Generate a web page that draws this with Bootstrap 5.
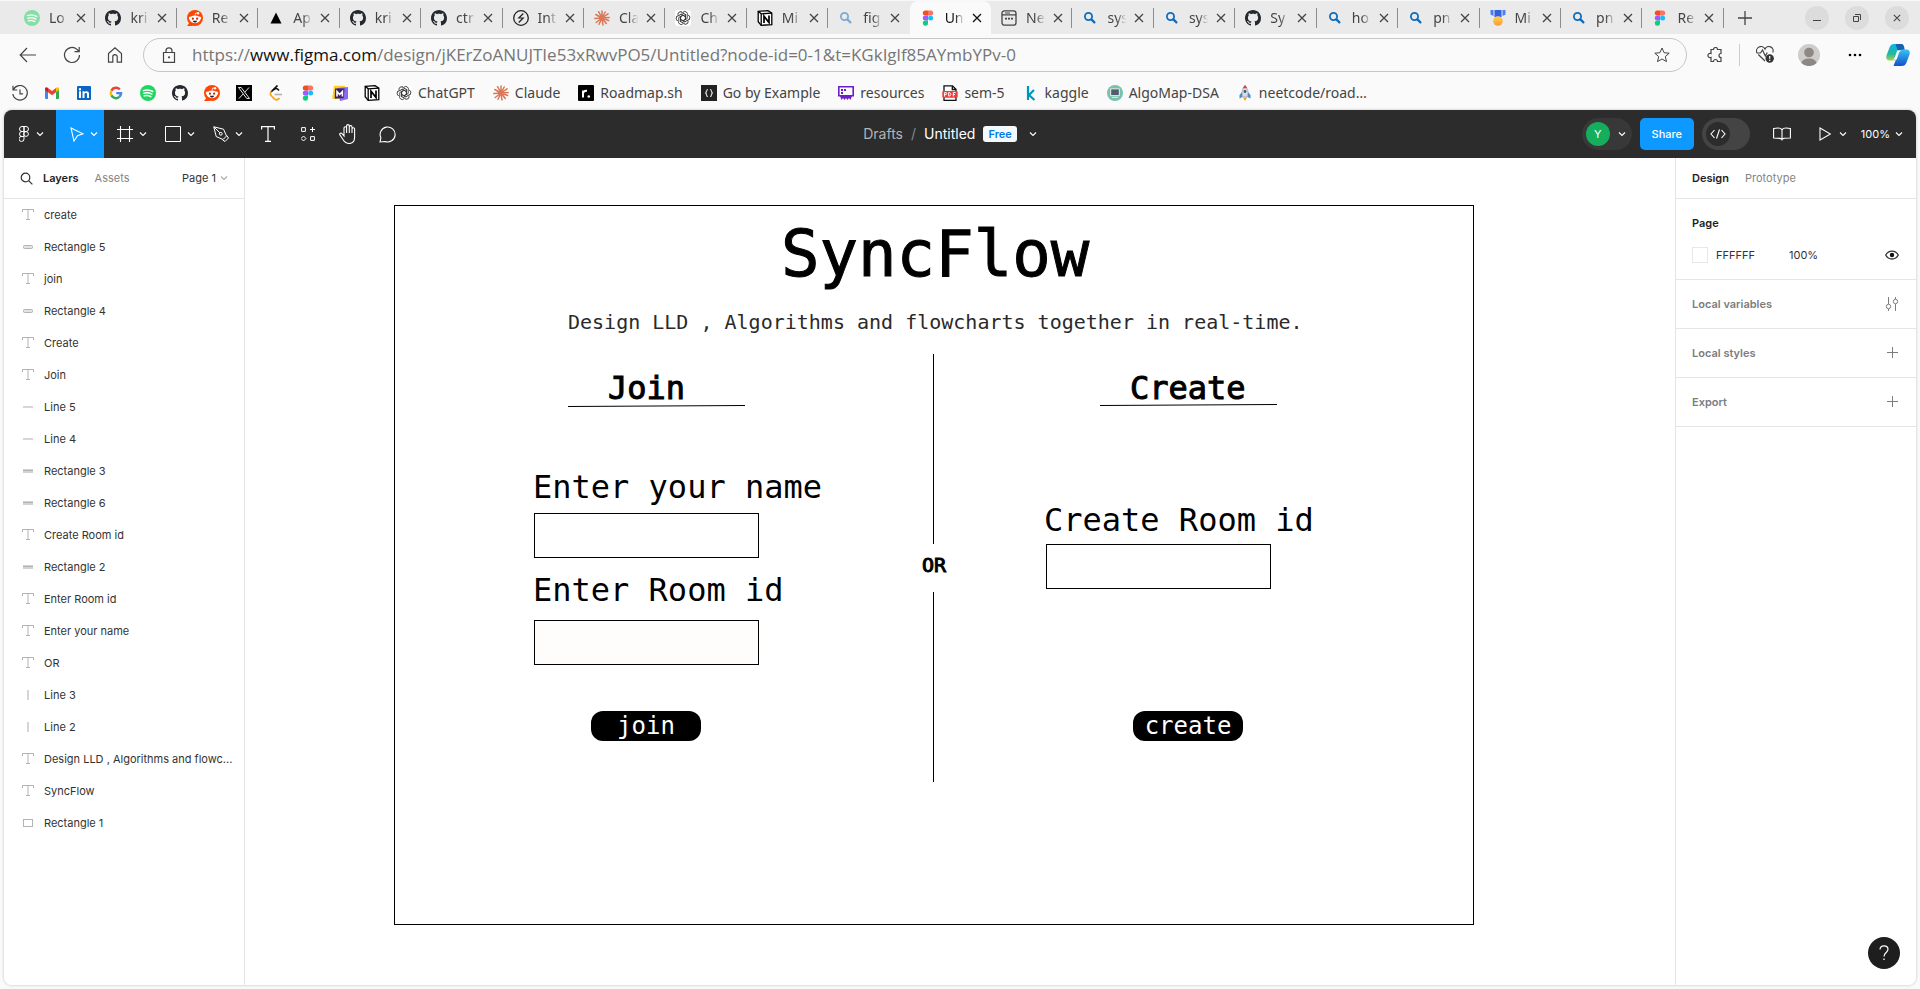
<!DOCTYPE html>
<html lang="en">
<head>
<meta charset="utf-8">
<meta name="viewport" content="width=device-width, initial-scale=1">
<title>Untitled – Figma</title>
<link href="https://cdn.jsdelivr.net/npm/bootstrap@5.3.0/dist/css/bootstrap.min.css" rel="stylesheet">
<style>
  :root { --line: #e5e5e5; --ink: #333; --blue: #0d99ff; --bar: #2c2c2c; }
  body { background: #fafafa; color: var(--ink); font-family: Inter, sans-serif; font-size: 11px; line-height: 16px; }
  button { background: none; border: 0; padding: 0; color: inherit; }
  a { color: inherit; text-decoration: none; }
  svg { display: block; flex: none; }
  .ln { fill: none; stroke: currentColor; }
  .browser-text { font-family: "Noto Sans", sans-serif; font-size: 14px; line-height: 20px; color: #444; }

  /* tab strip */
  .tab-strip { height: 34px; background: #eaeaea; border-top: 1px solid #f8f8f8; padding-left: 14px; }
  .tab-item { flex: 1 1 0; min-width: 0; height: 34px; padding-left: 10px; position: relative; }
  .tab-item::after { content: ""; position: absolute; right: 0; top: 7px; height: 20px; border-right: 1px solid #8c8c8c; }
  .tab-item.active-tab { background: #fafafa; border-radius: 8px 8px 0 0; color: #111; }
  .tab-item.active-tab::after, .tab-item.no-sep::after { display: none; }
  .tab-name { width: 24px; margin-left: 9px; white-space: nowrap;
    -webkit-mask-image: linear-gradient(90deg, #000 40%, transparent 80%); mask-image: linear-gradient(90deg, #000 40%, transparent 80%); }
  .tab-close { margin-left: 3px; }
  .dim { opacity: .5; }
  .strip-end { width: 196px; }
  .new-tab { margin: 0 53px 0 14px; }
  .win-btn { width: 24px; height: 24px; border-radius: 50%; background: #dcdcdc; }

  /* address row */
  .address-row { height: 41px; padding: 0 10px 0 19px; gap: 20px; color: #444; }
  .nav-keys { gap: 26px; }
  .address-box { flex: 1; height: 34px; border: 1px solid #c6c6c6; border-radius: 17px; padding: 0 16px 0 18px; background: #fafafa; }
  .url-text { font-family: "Open Sans", sans-serif; font-size: 17px; line-height: 24px; color: #767676; margin-left: 16px; }
  .url-text b { color: #111; font-weight: 400; }
  .bookmark-row { height: 35px; padding-left: 12px; gap: 16px; white-space: nowrap; }
  .bm-group { gap: 18px; }
  .bm { gap: 6px; }

  /* editor */
  .editor { margin: 0 4px 4px; min-height: calc(100vh - 114px); border-radius: 8px; background: #fff; box-shadow: 0 0 3px #bbb; overflow: hidden; }
  .editor-bar { height: 48px; background: var(--bar); color: #fff; }
  .bar-side { flex: 1; }
  .tool { height: 48px; display: flex; align-items: center; justify-content: center; gap: 6px; }
  .tool-menu { width: 52px; padding-left: 2px; gap: 7px; }
  .tool-wide { width: 48px; padding-left: 8px; }
  .tool-single { width: 40px; }
  .tool.on { background: var(--blue); }
  .doc-title { font-size: 14px; line-height: 20px; margin-right: 20px; gap: 8px; }
  .free-tag { background: #f2f9ff; color: #007be5; font-size: 11px; font-weight: 600; line-height: 16px; padding: 0 5px; border-radius: 3px; }
  .user-pill { width: 50px; height: 32px; border-radius: 16px; background: #383838; padding-left: 4px; }
  .user-dot { width: 24px; height: 24px; border-radius: 50%; background: #14ae5c; }
  .share-btn { width: 54px; height: 32px; border-radius: 5px; background: var(--blue); font-weight: 500; }
  .dev-switch { width: 48px; height: 32px; border-radius: 16px; background: #444; padding-left: 4px; }
  .dev-knob { width: 24px; height: 24px; border-radius: 50%; background: var(--bar); }
  .library-btn { margin: 0 28px 0 23px; }
  .zoom-btn { margin: 0 13px 0 14px; gap: 5px; }

  .side-left { width: 241px; border-right: 1px solid var(--line); }
  .side-right { width: 241px; border-left: 1px solid var(--line); }
  .side-head { height: 41px; border-bottom: 1px solid var(--line); padding: 0 16px; }
  .muted { color: #858585; }
  .strong { font-weight: 600; color: #1e1e1e; }
  .layers-tab { margin: 0 16px 0 10px; }
  .layer { height: 32px; padding: 0 10px 0 18px; gap: 10px; }
  .layer svg { color: #b3b3b3; }
  .panel { border-bottom: 1px solid var(--line); padding: 8px 17px 8px 16px; }
  .panel-line { height: 32px; }
  .swatch { width: 16px; height: 16px; border: 1px solid #e8e8e8; }
  .hex { width: 73px; }
  .quiet { color: #7d7d7d; font-weight: 600; }

  /* canvas objects */
  .stage { position: relative; min-width: 0; overflow: hidden; }
  .artboard { position: absolute; left: 149px; top: 47px; width: 1080px; height: 720px; border: 1px solid #000; color: #000; font-family: "DejaVu Sans Mono", monospace; }
  .artboard > * { position: absolute; white-space: pre; margin: 0; }
  .t64 { font-size: 64px; line-height: 64px; font-weight: 400; }
  .t32 { font-size: 32px; line-height: 32px; font-weight: 400; }
  .t20 { font-size: 20px; line-height: 20px; }
  .medium { -webkit-text-stroke: 1px #000; }
  .thin { color: #2a2a2a; }
  .field { width: 225px; height: 45px; border: 1px solid #000; border-radius: 0; background: #fff; padding: 0 8px; }
  .field.warm { background: #fffdfc; }
  .rule { width: 1px; height: 190px; background: #000; }
  .pill { width: 110px; height: 30px; border-radius: 12px; background: #000; color: #fff; font-size: 24px; line-height: 30px; }
  .help { position: absolute; right: 16px; bottom: 16px; width: 32px; height: 32px; border-radius: 50%; background: #1e1e1e; color: #fff; z-index: 2; }
</style>
</head>
<body>

<svg width="0" height="0" class="position-absolute" aria-hidden="true">
  <defs>
    <linearGradient id="cpA" x1="0" y1="0" x2="0" y2="1"><stop offset="0" stop-color="#0bb3e8"/><stop offset=".6" stop-color="#22b8a0"/><stop offset="1" stop-color="#a6d64a"/></linearGradient>
    <linearGradient id="cpB" x1="0" y1="0" x2="0" y2="1"><stop offset="0" stop-color="#35c4f4"/><stop offset="1" stop-color="#1550c8"/></linearGradient>
    <linearGradient id="medal" x1="0" y1="0" x2="0" y2="1"><stop offset="0" stop-color="#ffd34d"/><stop offset="1" stop-color="#f79a3c"/></linearGradient>
  </defs>
  <symbol id="i-x" viewBox="0 0 10 10"><path class="ln" d="M1 1l8 8M9 1L1 9" stroke-width="1.3"/></symbol>
  <symbol id="i-github" viewBox="0 0 16 16"><path fill="#24292f" d="M8 0C3.58 0 0 3.58 0 8c0 3.54 2.29 6.53 5.47 7.59.4.07.55-.17.55-.38 0-.19-.01-.82-.01-1.49-2.01.37-2.53-.49-2.69-.94-.09-.23-.48-.94-.82-1.13-.28-.15-.68-.52-.01-.53.63-.01 1.08.58 1.23.82.72 1.21 1.87.87 2.33.66.07-.52.28-.87.51-1.07-1.78-.2-3.64-.89-3.64-3.95 0-.87.31-1.59.82-2.15-.08-.2-.36-1.02.08-2.12 0 0 .67-.21 2.2.82.64-.18 1.32-.27 2-.27s1.36.09 2 .27c1.53-1.04 2.2-.82 2.2-.82.44 1.1.16 1.92.08 2.12.51.56.82 1.27.82 2.15 0 3.07-1.87 3.75-3.65 3.95.29.25.54.73.54 1.48 0 1.07-.01 1.93-.01 2.2 0 .21.15.46.55.38A8.01 8.01 0 0 0 16 8c0-4.42-3.58-8-8-8z"/></symbol>
  <symbol id="i-spotify" viewBox="0 0 16 16"><circle cx="8" cy="8" r="8" fill="#1ed760"/><path fill="none" stroke="#fff" stroke-linecap="round" stroke-width="1.5" d="M3.4 5.6c3.2-.9 6.8-.6 9.4.9M3.9 8.3c2.8-.8 5.7-.4 8 .9M4.300 10.800c2.300-.6 4.700-.3 6.600.8"/></symbol>
  <symbol id="i-reddit" viewBox="0 0 16 16"><circle cx="8" cy="8" r="8" fill="#ff4500"/><path fill="#ff4500" d="M0 16l3-4 3 4z"/><circle cx="3.300" cy="8" r="1.500" fill="#fff"/><circle cx="12.700" cy="8" r="1.500" fill="#fff"/><circle cx="11" cy="3.200" r="1.200" fill="#fff"/><path fill="none" stroke="#fff" stroke-width=".7" d="M8 5.500l.6-2.500 2.300.3"/><ellipse cx="8" cy="9.300" rx="5.300" ry="3.900" fill="#fff"/><circle cx="5.900" cy="8.700" r="1.100" fill="#c22e00"/><circle cx="10.100" cy="8.700" r="1.100" fill="#c22e00"/><path fill="#142030" d="M5.800 10.700h4.400c-.4 1.400-1.300 1.700-2.200 1.700s-1.800-.3-2.200-1.700z"/></symbol>
  <symbol id="i-vercel" viewBox="0 0 16 16"><path fill="#000" d="M8 2.500L13.500 13.500h-11z"/></symbol>
  <symbol id="i-interview" viewBox="0 0 16 16"><circle cx="8" cy="8" r="7.300" fill="none" stroke="#222" stroke-width="1.300"/><path fill="none" stroke="#222" stroke-width="1.200" d="M10.300 3.500L5.800 8h4.400l-4.500 4.500"/></symbol>
  <symbol id="i-claude" viewBox="0 0 16 16"><path stroke="#d97757" stroke-width="1.500" stroke-linecap="round" d="M8 8V1M8 8l3.200-6M8 8l6-4.200M8 8l7.200-.6M8 8l6.600 2.500M8 8l4.300 5.500M8 8l1 7M8 8l-3 6.300M8 8l-5.800 4.500M8 8L.8 8.600M8 8L1.800 4.500M8 8L4.600 1.700"/></symbol>
  <symbol id="i-openai" viewBox="0 0 16 16"><rect width="16" height="16" rx="3" fill="#fff"/><g fill="none" stroke="#333" stroke-width=".9"><path id="petal" d="M8 2.200a2.600 2.600 0 0 1 4.200 2.900v3.400L8.200 10.800 5.800 9.400"/><use href="#petal" transform="rotate(60 8 8)"/><use href="#petal" transform="rotate(120 8 8)"/><use href="#petal" transform="rotate(180 8 8)"/><use href="#petal" transform="rotate(240 8 8)"/><use href="#petal" transform="rotate(300 8 8)"/></g></symbol>
  <symbol id="i-notion" viewBox="0 0 16 16"><path fill="#fff" stroke="#000" stroke-width="1.300" d="M1.200 1.300l9.800-.6 3.800 2.500v11.500l-10.600.6-3-3.600z"/><path fill="none" stroke="#000" stroke-width="1.300" d="M1.200 1.300l3 2.500 10.600-.6M4.200 3.800v11.600"/><path fill="none" stroke="#000" stroke-width="1.700" d="M7 13V6.200l5 6.300V5.500"/></symbol>
  <symbol id="i-find" viewBox="0 0 16 16"><circle cx="6.500" cy="6.500" r="3.600" fill="none" stroke="#0f6cbd" stroke-width="1.800"/><path stroke="#0f6cbd" stroke-width="2.200" stroke-linecap="round" d="M9.400 9.400l3 3"/></symbol>
  <symbol id="i-figma" viewBox="0 0 16 16"><path fill="#f24e1e" d="M8 .5H5.300a2.500 2.500 0 000 5H8z"/><path fill="#ff7262" d="M8 .5h2.700a2.500 2.500 0 010 5H8z"/><path fill="#a259ff" d="M8 5.500H5.300a2.500 2.500 0 000 5H8z"/><circle cx="10.600" cy="8" r="2.500" fill="#1abcfe"/><path fill="#0acf83" d="M5.300 10.500H8V13a2.600 2.600 0 11-2.700-2.500z"/></symbol>
  <symbol id="i-page" viewBox="0 0 16 16"><rect x="1" y=".8" width="14" height="14.400" rx="2.500" fill="none" stroke="#444" stroke-width="1.300"/><path stroke="#444" stroke-width="1.200" fill="none" d="M1 4.800h14M4 3h5"/><path stroke="#444" stroke-width="1.600" d="M4 8.600h2m1 0h2m1 0h2"/></symbol>
  <symbol id="i-medal" viewBox="0 0 16 16"><path fill="#4d7df2" d="M.5 0h3v6l-3-1.500zM12.500 0h3v4.500l-3 1.500z"/><path fill="#2f63e0" d="M4.500 0h7v7l-3.500 2-3.500-2z"/><circle cx="8" cy="11" r="4.800" fill="url(#medal)"/></symbol>
  <symbol id="c-down" viewBox="0 0 8 6"><path class="ln" d="M1 1.500l3 3 3-3" stroke-width="1.100"/></symbol>
  <symbol id="l-text" viewBox="0 0 12 12"><path class="ln" d="M.5 3V.5h11V3M6 .5v10M4 10.500h4"/></symbol>
  <symbol id="l-round" viewBox="0 0 12 12"><rect x="1.500" y="4.500" width="9" height="3" rx="1" fill="#e2e2e2" stroke="currentColor"/></symbol>
  <symbol id="l-flat" viewBox="0 0 12 12"><path fill="#d2d2d2" d="M1 4h10v4H1z"/><path stroke="#b5b5b5" d="M1 5.500h10"/></symbol>
  <symbol id="l-hline" viewBox="0 0 12 12"><path stroke="#d6d6d6" stroke-width="2" d="M1 6h10"/></symbol>
  <symbol id="l-vline" viewBox="0 0 12 12"><path stroke="#d6d6d6" stroke-width="2" d="M6 1v10"/></symbol>
  <symbol id="l-rect" viewBox="0 0 12 12"><rect x="1.500" y="2.500" width="9" height="7" class="ln"/></symbol>
</svg>

<!-- browser tabs -->
<div class="tab-strip d-flex align-items-center browser-text">
  <div class="d-flex flex-grow-1" id="tabs">
    <div class="tab-item d-flex align-items-center"><svg class="dim" width="16" height="16"><use href="#i-spotify"/></svg><a href="#" class="tab-name">Lo</a><button class="tab-close" aria-label="Close tab"><svg width="10" height="10"><use href="#i-x"/></svg></button></div>
    <div class="tab-item d-flex align-items-center"><svg width="16" height="16"><use href="#i-github"/></svg><a href="#" class="tab-name">kri</a><button class="tab-close" aria-label="Close tab"><svg width="10" height="10"><use href="#i-x"/></svg></button></div>
    <div class="tab-item d-flex align-items-center"><svg width="16" height="16"><use href="#i-reddit"/></svg><a href="#" class="tab-name">Re</a><button class="tab-close" aria-label="Close tab"><svg width="10" height="10"><use href="#i-x"/></svg></button></div>
    <div class="tab-item d-flex align-items-center"><svg width="16" height="16"><use href="#i-vercel"/></svg><a href="#" class="tab-name">Ap</a><button class="tab-close" aria-label="Close tab"><svg width="10" height="10"><use href="#i-x"/></svg></button></div>
    <div class="tab-item d-flex align-items-center"><svg width="16" height="16"><use href="#i-github"/></svg><a href="#" class="tab-name">kri</a><button class="tab-close" aria-label="Close tab"><svg width="10" height="10"><use href="#i-x"/></svg></button></div>
    <div class="tab-item d-flex align-items-center"><svg width="16" height="16"><use href="#i-github"/></svg><a href="#" class="tab-name">ctr</a><button class="tab-close" aria-label="Close tab"><svg width="10" height="10"><use href="#i-x"/></svg></button></div>
    <div class="tab-item d-flex align-items-center"><svg width="16" height="16"><use href="#i-interview"/></svg><a href="#" class="tab-name">Int</a><button class="tab-close" aria-label="Close tab"><svg width="10" height="10"><use href="#i-x"/></svg></button></div>
    <div class="tab-item d-flex align-items-center"><svg width="16" height="16"><use href="#i-claude"/></svg><a href="#" class="tab-name">Cla</a><button class="tab-close" aria-label="Close tab"><svg width="10" height="10"><use href="#i-x"/></svg></button></div>
    <div class="tab-item d-flex align-items-center"><svg width="16" height="16"><use href="#i-openai"/></svg><a href="#" class="tab-name">Ch</a><button class="tab-close" aria-label="Close tab"><svg width="10" height="10"><use href="#i-x"/></svg></button></div>
    <div class="tab-item d-flex align-items-center"><svg width="16" height="16"><use href="#i-notion"/></svg><a href="#" class="tab-name">Mi</a><button class="tab-close" aria-label="Close tab"><svg width="10" height="10"><use href="#i-x"/></svg></button></div>
    <div class="tab-item no-sep d-flex align-items-center"><svg class="dim" width="16" height="16"><use href="#i-find"/></svg><a href="#" class="tab-name">fig</a><button class="tab-close" aria-label="Close tab"><svg width="10" height="10"><use href="#i-x"/></svg></button></div>
    <div class="tab-item active-tab d-flex align-items-center"><svg width="16" height="16"><use href="#i-figma"/></svg><a href="#" class="tab-name">Un</a><button class="tab-close" aria-label="Close tab"><svg width="10" height="10"><use href="#i-x"/></svg></button></div>
    <div class="tab-item d-flex align-items-center"><svg width="16" height="16"><use href="#i-page"/></svg><a href="#" class="tab-name">Ne</a><button class="tab-close" aria-label="Close tab"><svg width="10" height="10"><use href="#i-x"/></svg></button></div>
    <div class="tab-item d-flex align-items-center"><svg width="16" height="16"><use href="#i-find"/></svg><a href="#" class="tab-name">sys</a><button class="tab-close" aria-label="Close tab"><svg width="10" height="10"><use href="#i-x"/></svg></button></div>
    <div class="tab-item d-flex align-items-center"><svg width="16" height="16"><use href="#i-find"/></svg><a href="#" class="tab-name">sys</a><button class="tab-close" aria-label="Close tab"><svg width="10" height="10"><use href="#i-x"/></svg></button></div>
    <div class="tab-item d-flex align-items-center"><svg width="16" height="16"><use href="#i-github"/></svg><a href="#" class="tab-name">Sy</a><button class="tab-close" aria-label="Close tab"><svg width="10" height="10"><use href="#i-x"/></svg></button></div>
    <div class="tab-item d-flex align-items-center"><svg width="16" height="16"><use href="#i-find"/></svg><a href="#" class="tab-name">ho</a><button class="tab-close" aria-label="Close tab"><svg width="10" height="10"><use href="#i-x"/></svg></button></div>
    <div class="tab-item d-flex align-items-center"><svg width="16" height="16"><use href="#i-find"/></svg><a href="#" class="tab-name">pn</a><button class="tab-close" aria-label="Close tab"><svg width="10" height="10"><use href="#i-x"/></svg></button></div>
    <div class="tab-item d-flex align-items-center"><svg width="16" height="16"><use href="#i-medal"/></svg><a href="#" class="tab-name">Mi</a><button class="tab-close" aria-label="Close tab"><svg width="10" height="10"><use href="#i-x"/></svg></button></div>
    <div class="tab-item d-flex align-items-center"><svg width="16" height="16"><use href="#i-find"/></svg><a href="#" class="tab-name">pn</a><button class="tab-close" aria-label="Close tab"><svg width="10" height="10"><use href="#i-x"/></svg></button></div>
    <div class="tab-item d-flex align-items-center"><svg width="16" height="16"><use href="#i-figma"/></svg><a href="#" class="tab-name">Re</a><button class="tab-close" aria-label="Close tab"><svg width="10" height="10"><use href="#i-x"/></svg></button></div>
  </div>
  <div class="strip-end d-flex align-items-center">
    <button class="new-tab" aria-label="New tab"><svg width="14" height="14" viewBox="0 0 14 14"><path class="ln" d="M7 0v14M0 7h14" stroke-width="1.300"/></svg></button>
    <div class="d-flex gap-3">
      <button class="win-btn d-flex align-items-center justify-content-center" aria-label="Minimize"><svg width="8" height="8" viewBox="0 0 8 8"><path class="ln" d="M0 6.500h8"/></svg></button>
      <button class="win-btn d-flex align-items-center justify-content-center" aria-label="Restore"><svg width="8" height="8" viewBox="0 0 8 8"><path class="ln" d="M.5 2.500h5v5h-5zM2 .5h5.500V6"/></svg></button>
      <button class="win-btn d-flex align-items-center justify-content-center" aria-label="Close"><svg width="8" height="8"><use href="#i-x"/></svg></button>
    </div>
  </div>
</div>

<!-- address row -->
<div class="address-row d-flex align-items-center">
  <div class="nav-keys d-flex align-items-center">
    <button aria-label="Back"><svg width="18" height="16" viewBox="0 0 18 16"><path class="ln" d="M17 8H1.500M8 1L1.200 8 8 15" stroke-width="1.200"/></svg></button>
    <button aria-label="Reload"><svg width="18" height="18" viewBox="0 0 18 18"><path class="ln" d="M16.500 9A7.500 7.500 0 1 1 14 3.400L16 5.500M16.200 1v4.700h-4.700" stroke-width="1.200"/></svg></button>
    <button aria-label="Home"><svg width="16" height="16" viewBox="0 0 16 16"><path class="ln" d="M1.500 6.500L8 .8l6.500 5.700v8.700h-4.300V9.800a2.200 2.200 0 0 0-4.400 0v5.400H1.500z" stroke-width="1.200"/></svg></button>
  </div>
  <div class="address-box d-flex align-items-center">
    <svg width="14" height="16" viewBox="0 0 14 16"><path class="ln" d="M1.500 5.500h11v9.800h-11zM4 5.500V3.800a3 3 0 0 1 6 0v1.700" stroke-width="1.200"/><circle cx="7" cy="10.300" r="1.100" fill="currentColor"/></svg>
    <div class="url-text text-nowrap">https://<b>www.figma.com</b>/design/jKErZoANUJTIe53xRwvPO5/Untitled?node-id=0-1&amp;t=KGkIglf85AYmbYPv-0</div>
    <button class="ms-auto" aria-label="Add to favorites"><svg width="16" height="16" viewBox="0 0 16 16"><path class="ln" stroke="#666" d="M8 1l2.100 4.700 5.100.5-3.900 3.400 1.200 5L8 12l-4.500 2.600 1.200-5L.8 6.200l5.100-.5z"/></svg></button>
  </div>
  <div class="d-flex align-items-center">
    <button aria-label="Extensions" class="me-3"><svg width="16" height="16" viewBox="0 0 16 16"><path class="ln" d="M4 2.500h2.500a2 2 0 0 1 4 0H14v4a2 2 0 1 0 0 4v4h-3.500a2 2 0 1 0-4 0H4v-4a2.200 2.200 0 1 1 0-4z" stroke-width="1.200"/></svg></button>
    <div class="vr me-3"></div>
    <button aria-label="Performance"><svg width="18" height="17" viewBox="0 0 18 17"><path class="ln" d="M9 15L2.300 8.500M1 7A4.200 4.200 0 0 1 9 3a4.200 4.200 0 0 1 7.700 3.500M.8 7h3.700L6.500 4l2.800 6 2-3.500" stroke-width="1.200"/><circle cx="13.700" cy="12.500" r="4.200" fill="#333"/><path stroke="#fff" stroke-width="1.200" d="M13.700 10v2.800m0 1v1.200"/></svg></button>
    <button aria-label="Profile" class="mx-4"><svg width="22" height="22" viewBox="0 0 22 22"><circle cx="11" cy="11" r="11" fill="#cfccc9"/><circle cx="11" cy="8.500" r="4.800" fill="#8c8885"/><path fill="#8c8885" d="M3.400 19c.8-3.200 4-4.600 7.600-4.600s6.800 1.400 7.600 4.600a11 11 0 0 1-15.200 0z"/></svg></button>
    <button aria-label="Menu" class="ms-1"><svg width="14" height="4" viewBox="0 0 14 4"><circle cx="2" cy="2" r="1.300"/><circle cx="7" cy="2" r="1.300"/><circle cx="12" cy="2" r="1.300"/></svg></button>
    <button aria-label="Copilot" class="ms-4"><svg width="24" height="22" viewBox="0 0 24 22"><path fill="url(#cpA)" d="M8.500 0h8l-4.500 12c-1 3-2 4.500-5 4.500H3.500C.5 16.500-.2 14 .5 11.500l3-8C4.400 1 5.800 0 8.500 0z"/><path fill="#1c5fb0" d="M9.500 0h6c1.500 0 2.300 1.500 2.800 3.500L18.600 6h-7z"/><path fill="url(#cpB)" d="M15.500 22h-8l4.500-12c1-3 2-4.500 5-4.500h3.500c3 0 3.700 2.500 3 5l-3 8c-.9 2.500-2.300 3.500-5 3.500z"/><path fill="#fff" d="M11.200 6.500h4c-1.800.8-2.400 2.500-3 4.500l-1.500 4.500h-4c1.800-.8 2.400-2.500 3-4.500z"/></svg></button>
  </div>
</div>

<!-- bookmarks -->
<div class="bookmark-row d-flex align-items-center browser-text">
  <a href="#" aria-label="History"><svg width="16" height="16" viewBox="0 0 16 16"><path class="ln" d="M1.500 4.500A7.300 7.300 0 1 1 .8 9M1 .8v4.200h4.300M8 4.500v4.300h3" stroke-width="1.200"/></svg></a>
  <a href="#" aria-label="Gmail"><svg width="16" height="16" viewBox="0 0 16 16"><path fill="#4285f4" d="M1 4l3 2.200V14H2a1 1 0 0 1-1-1z"/><path fill="#34a853" d="M15 4l-3 2.200V14h2a1 1 0 0 0 1-1z"/><path fill="#ea4335" d="M4 3l4 3 4-3v4.200l-4 3-4-3z"/><path fill="#c5221f" d="M1 4c0-2 2-2 3-1v4.200L1 5z"/><path fill="#fbbc04" d="M15 4c0-2-2-2-3-1v4.200L15 5z"/></svg></a>
  <a href="#" aria-label="LinkedIn"><svg width="16" height="16" viewBox="0 0 16 16"><rect x="1" y="1" width="14" height="14" rx="1" fill="#0a66c2"/><path fill="#fff" d="M3 6.300h2V13H3zM4 3a1.200 1.200 0 1 1 0 2.400A1.200 1.200 0 0 1 4 3zM6.500 6.300h2v1c.9-1.700 4.500-1.700 4.500 1.500V13h-2V9.300c0-2-2.500-1.700-2.500 0V13h-2z"/></svg></a>
  <a href="#" aria-label="Google"><svg width="16" height="16" viewBox="0 0 16 16"><g fill="none" stroke-width="2.400"><path stroke="#ea4335" d="M3.400 5.600A5.100 5.100 0 0 1 11.800 4.500"/><path stroke="#fbbc05" d="M3.400 5.600a5.100 5.100 0 0 0 0 4.800"/><path stroke="#34a853" d="M3.400 10.400a5.100 5.100 0 0 0 7.900 1.500"/><path stroke="#4285f4" d="M11.300 11.900A5.100 5.100 0 0 0 13.100 8.100H8.200"/></g></svg></a>
  <a href="#" aria-label="Spotify"><svg width="16" height="16"><use href="#i-spotify"/></svg></a>
  <a href="#" aria-label="GitHub"><svg width="16" height="16"><use href="#i-github"/></svg></a>
  <a href="#" aria-label="Reddit"><svg width="16" height="16"><use href="#i-reddit"/></svg></a>
  <a href="#" aria-label="X"><svg width="16" height="16" viewBox="0 0 16 16"><rect width="16" height="16" fill="#000"/><path fill="none" stroke="#fff" stroke-width=".9" d="M2.500 2.500h2.700l8.300 11h-2.700zM13 2.500L8.800 7.200M7.200 8.900l-4.300 4.700"/></svg></a>
  <a href="#" aria-label="LeetCode"><svg width="16" height="16" viewBox="0 0 16 16"><path fill="none" stroke="#111" stroke-width="1.700" d="M9.500.5L3 7"/><path fill="none" stroke="#ffa116" stroke-width="1.700" d="M3.500 6.500c-1.500 1.500-1.500 3 0 4.500l2.500 2.600c1.500 1.500 3 1.500 4.500.2l1-1"/><path fill="none" stroke="#111" stroke-width="1.500" d="M5 5l2.500-1.300c1.200-.5 2.200.2 3.500 1.700"/><path stroke="#b3b3b3" stroke-width="1.600" d="M6.500 9.500H14"/></svg></a>
  <a href="#" aria-label="Figma"><svg width="16" height="16"><use href="#i-figma"/></svg></a>
  <a href="#" aria-label="Mobbin"><svg width="16" height="16" viewBox="0 0 16 16"><path fill="#ffd21f" d="M2 .8h11l-2 13H0z"/><path fill="#8a6cf0" d="M5 3l11-1v12l-8 2z"/><path fill="#3d2167" d="M3 3.500h9.500l-.8 9.500-9 .8z"/><path fill="none" stroke="#fff" stroke-width="1.600" d="M5 11.500V6.500l2.700 3 2.700-3v5"/></svg></a>
  <a href="#" aria-label="Notion"><svg width="16" height="16"><use href="#i-notion"/></svg></a>
  <div class="bm-group d-flex align-items-center">
    <a href="#" class="d-flex align-items-center bm"><svg width="16" height="16"><use href="#i-openai"/></svg>ChatGPT</a>
    <a href="#" class="d-flex align-items-center bm"><svg width="16" height="16"><use href="#i-claude"/></svg>Claude</a>
    <a href="#" class="d-flex align-items-center bm"><svg width="16" height="16" viewBox="0 0 16 16"><rect width="16" height="16" rx="1" fill="#000"/><path fill="none" stroke="#fff" stroke-width="2" d="M5 12.500V5.500M5 8.500C5.300 6 7 5.500 9 5.700"/><circle cx="10.800" cy="11.500" r="1.300" fill="#fff"/></svg>Roadmap.sh</a>
    <a href="#" class="d-flex align-items-center bm"><svg width="16" height="16" viewBox="0 0 16 16"><rect width="16" height="16" fill="#222"/><path fill="none" stroke="#ddd" stroke-width="1.200" d="M7 4.500c-2 0-1 2.500-2.300 3.500C6 9 5 11.500 7 11.500M9 4.500c2 0 1 2.500 2.300 3.500C10 9 11 11.500 9 11.500"/></svg>Go by Example</a>
    <a href="#" class="d-flex align-items-center bm"><svg width="16" height="16" viewBox="0 0 16 16"><path fill="none" stroke="#6a1fc9" stroke-width="1.600" d="M.8 1.800h14.400v9H.8z"/><path fill="#6a1fc9" d="M3 4h2v2H3zM6 4h2v2H6zM3 7h2v2H3zM2 11h12l-1.500 4-1.500-2-1.500 2L8 13l-1.500 2L5 13l-1.500 2z"/></svg>resources</a>
    <a href="#" class="d-flex align-items-center bm"><svg width="16" height="16" viewBox="0 0 16 16"><path fill="#fff" stroke="#111" stroke-width="1.300" d="M2 .8h8.500L14 4.300v11H2zM10.300.8v3.700H14"/><rect x=".3" y="6" width="15.400" height="6.800" rx="1" fill="#f33a3a"/><path fill="none" stroke="#fff" stroke-width="1" d="M2.600 11.500V7.500h1.300c1.200 0 1.200 2.100 0 2.100H2.600M6.700 7.500v3.600c2.800 0 2.800-3.600 0-3.600M11.300 11.500v-4h2.300M11.300 9.500H13"/></svg>sem-5</a>
    <a href="#" class="d-flex align-items-center bm"><svg width="16" height="16" viewBox="0 0 16 16"><path fill="none" stroke="#0095c0" stroke-width="2.200" d="M5 1v14M11 5l-5 5 5.500 5"/></svg>kaggle</a>
    <a href="#" class="d-flex align-items-center bm"><svg width="16" height="16" viewBox="0 0 16 16"><circle cx="8" cy="8" r="8" fill="#76c2af"/><rect x="3" y="3.200" width="10" height="8" rx="1" fill="#e0e0d1"/><rect x="4.200" y="4.400" width="7.600" height="5.600" fill="#4f5d73"/><path fill="#e0e0d1" d="M5 12h6v1H5z"/></svg>AlgoMap-DSA</a>
    <a href="#" class="d-flex align-items-center bm"><svg width="16" height="16" viewBox="0 0 16 16"><path fill="#4b8fc9" d="M5 7L2.500 10v3.500L5.500 12zM11 7l2.500 3v3.500l-3-1.500z"/><path fill="#d5dde5" stroke="#8796a5" stroke-width=".6" d="M8 1c2 2 3 4 3 6.500L10.500 12h-5L5 7.500C5 5 6 3 8 1z"/><path fill="#d9413a" d="M8 0c1.200 1.200 1.800 2.200 2.100 3.300H5.900C6.200 2.200 6.800 1.200 8 0z"/><circle cx="8" cy="6.500" r="1.400" fill="#3b5a78"/><path fill="#f39a2b" d="M6 12.500h4L8 16z"/></svg>neetcode/road…</a>
  </div>
</div>

<!-- editor -->
<main class="editor d-flex flex-column position-relative">
  <header class="editor-bar d-flex align-items-center">
    <div class="bar-side d-flex align-items-center">
      <button class="tool tool-menu" aria-label="Main menu"><svg width="10" height="16" viewBox="0 0 10 16"><g class="ln"><path d="M5 .5H3a2.500 2.500 0 0 0 0 5h2zM5 .5h2a2.500 2.500 0 0 1 0 5H5zM5 5.500H3a2.500 2.500 0 0 0 0 5h2zM5 10.500H3A2.500 2.500 0 1 0 5 13z"/><circle cx="7" cy="8" r="2.400"/></g></svg><svg width="8" height="6"><use href="#c-down"/></svg></button>
      <button class="tool tool-wide on" aria-label="Move"><svg width="14" height="15" viewBox="0 0 14 15"><path class="ln" d="M1 1l12 5.800-5.500 2L4 14z" stroke-width="1.100"/></svg><svg width="8" height="6"><use href="#c-down"/></svg></button>
      <button class="tool tool-wide" aria-label="Frame"><svg width="16" height="16" viewBox="0 0 16 16"><path class="ln" d="M3.500 0v16M12.500 0v16M0 3.500h16M0 12.500h16" stroke-width="1.100"/></svg><svg width="8" height="6"><use href="#c-down"/></svg></button>
      <button class="tool tool-wide" aria-label="Rectangle"><svg width="16" height="16" viewBox="0 0 16 16"><path class="ln" d="M.5.5h15v15H.5z"/></svg><svg width="8" height="6"><use href="#c-down"/></svg></button>
      <button class="tool tool-wide" aria-label="Pen"><svg width="16" height="16" viewBox="0 0 16 16"><path class="ln" d="M.8.8l9.700 2.400 3 6.800-3.500 3.500L3.200 10.500zM.8.8l6 6M13.800 9.500l1.700 2.500-3.500 3.500L9.500 13.800"/><circle cx="7.800" cy="7.800" r="1.400" class="ln"/></svg><svg width="8" height="6"><use href="#c-down"/></svg></button>
      <button class="tool tool-single" aria-label="Text"><svg width="14" height="16" viewBox="0 0 14 16"><path class="ln" d="M.6 3.500V.6h12.800v2.900M7 .6v14.800M4 15.400h6" stroke-width="1.200"/></svg></button>
      <button class="tool tool-single" aria-label="Resources"><svg width="14" height="14" viewBox="0 0 14 14"><path class="ln" d="M.6.6h3.800v3.800H.6zM9.600 9.600h3.800v3.800H9.600zM11.500 0v5M9 2.500h5M2.500 9l2.500 2.500L2.500 14 0 11.500z"/></svg></button>
      <button class="tool tool-single" aria-label="Hand"><svg width="18" height="20" viewBox="0 0 18 20"><path class="ln" d="M5 12V4a1.300 1.300 0 0 1 2.600 0v5V2a1.300 1.300 0 0 1 2.700 0v7-6a1.300 1.300 0 0 1 2.700 0v6-4a1.300 1.300 0 0 1 2.600 0v8c0 4-2.200 6.500-5.500 6.500S5.500 18 4 15.500L.8 10.800C.3 9.300 2 8.500 3 9.600l2 2.400z" stroke-width="1.100"/></svg></button>
      <button class="tool tool-single" aria-label="Comment"><svg width="18" height="17" viewBox="0 0 18 17"><path class="ln" d="M1 16l.9-4.200A7.500 7.500 0 1 1 6 15.500z" stroke-width="1.100"/></svg></button>
    </div>
    <div class="d-flex align-items-center doc-title">
      <a href="#" style="color:#b3b3b3">Drafts</a><span style="color:#888">/</span><a href="#">Untitled</a>
      <span class="free-tag">Free</span>
      <button class="ms-1" aria-label="File menu"><svg width="8" height="6"><use href="#c-down"/></svg></button>
    </div>
    <div class="bar-side d-flex align-items-center justify-content-end">
      <button class="user-pill d-flex align-items-center gap-2" aria-label="Account"><span class="user-dot d-flex align-items-center justify-content-center">Y</span><svg width="8" height="6"><use href="#c-down"/></svg></button>
      <button class="share-btn mx-2">Share</button>
      <button class="dev-switch d-flex align-items-center" aria-label="Dev mode"><span class="dev-knob d-flex align-items-center justify-content-center"><svg width="16" height="10" viewBox="0 0 16 10"><path class="ln" d="M4.500 1L1 5l3.500 4M11.500 1L15 5l-3.500 4M9.500.5l-3 9" stroke-width="1.100"/></svg></span></button>
      <button class="library-btn" aria-label="Library"><svg width="18" height="14" viewBox="0 0 18 14"><path class="ln" d="M9 12.500C8.500 11 7 11 .6 11V1.500c4-.8 7.400-.8 8.400 1.200 1-2 4.400-2 8.400-1.200V11C11 11 9.500 11 9 12.500zM9 2.500v10" stroke-width="1.100"/></svg></button>
      <button class="d-flex align-items-center gap-2" aria-label="Present"><svg width="12" height="14" viewBox="0 0 12 14"><path class="ln" d="M1 1l10.500 6L1 13z" stroke-width="1.100"/></svg><svg width="8" height="6"><use href="#c-down"/></svg></button>
      <button class="zoom-btn d-flex align-items-center">100%<svg width="8" height="6"><use href="#c-down"/></svg></button>
    </div>
  </header>

  <div class="d-flex flex-grow-1">
    <aside class="side-left flex-shrink-0 bg-white">
      <div class="side-head d-flex align-items-center">
        <svg width="13" height="13" viewBox="0 0 13 13"><circle cx="5.500" cy="5.500" r="4.300" class="ln" stroke-width="1.200"/><path class="ln" d="M8.600 8.600l3.800 3.800" stroke-width="1.200"/></svg>
        <a href="#" class="strong layers-tab">Layers</a><a href="#" class="muted">Assets</a>
        <button class="ms-auto d-flex align-items-center gap-1">Page 1<svg width="8" height="6" style="color:#aaa"><use href="#c-down"/></svg></button>
      </div>
      <ul class="list-unstyled mb-0">
        <li class="layer d-flex align-items-center"><svg width="12" height="12"><use href="#l-text"/></svg>create</li>
        <li class="layer d-flex align-items-center"><svg width="12" height="12"><use href="#l-round"/></svg>Rectangle 5</li>
        <li class="layer d-flex align-items-center"><svg width="12" height="12"><use href="#l-text"/></svg>join</li>
        <li class="layer d-flex align-items-center"><svg width="12" height="12"><use href="#l-round"/></svg>Rectangle 4</li>
        <li class="layer d-flex align-items-center"><svg width="12" height="12"><use href="#l-text"/></svg>Create</li>
        <li class="layer d-flex align-items-center"><svg width="12" height="12"><use href="#l-text"/></svg>Join</li>
        <li class="layer d-flex align-items-center"><svg width="12" height="12"><use href="#l-hline"/></svg>Line 5</li>
        <li class="layer d-flex align-items-center"><svg width="12" height="12"><use href="#l-hline"/></svg>Line 4</li>
        <li class="layer d-flex align-items-center"><svg width="12" height="12"><use href="#l-flat"/></svg>Rectangle 3</li>
        <li class="layer d-flex align-items-center"><svg width="12" height="12"><use href="#l-flat"/></svg>Rectangle 6</li>
        <li class="layer d-flex align-items-center"><svg width="12" height="12"><use href="#l-text"/></svg>Create Room id</li>
        <li class="layer d-flex align-items-center"><svg width="12" height="12"><use href="#l-flat"/></svg>Rectangle 2</li>
        <li class="layer d-flex align-items-center"><svg width="12" height="12"><use href="#l-text"/></svg>Enter Room id</li>
        <li class="layer d-flex align-items-center"><svg width="12" height="12"><use href="#l-text"/></svg>Enter your name</li>
        <li class="layer d-flex align-items-center"><svg width="12" height="12"><use href="#l-text"/></svg>OR</li>
        <li class="layer d-flex align-items-center"><svg width="12" height="12"><use href="#l-vline"/></svg>Line 3</li>
        <li class="layer d-flex align-items-center"><svg width="12" height="12"><use href="#l-vline"/></svg>Line 2</li>
        <li class="layer d-flex align-items-center"><svg width="12" height="12"><use href="#l-text"/></svg><span class="text-nowrap">Design LLD , Algorithms and flowc...</span></li>
        <li class="layer d-flex align-items-center"><svg width="12" height="12"><use href="#l-text"/></svg>SyncFlow</li>
        <li class="layer d-flex align-items-center"><svg width="12" height="12"><use href="#l-rect"/></svg>Rectangle 1</li>
      </ul>
    </aside>

    <section class="stage flex-grow-1 bg-white">
      <div class="artboard">
        <h1 class="t64 medium" style="left:386px;top:16px">SyncFlow</h1>
        <p class="t20 thin" style="left:173px;top:106px">Design LLD , Algorithms and flowcharts together in real-time.</p>
        <h2 class="t32 medium" style="left:213px;top:166px">Join</h2>
        <svg width="177" height="2" viewBox="0 0 177 2" style="left:173px;top:199px"><path stroke="#000" d="M0 1.500L177 .5"/></svg>
        <h2 class="t32 medium" style="left:735px;top:166px">Create</h2>
        <svg width="177" height="2" viewBox="0 0 177 2" style="left:705px;top:198px"><path stroke="#000" d="M0 1.500L177 .5"/></svg>
        <div class="rule" style="left:538px;top:148px"></div>
        <span class="t20 medium" style="left:527px;top:349px">OR</span>
        <div class="rule" style="left:538px;top:386px"></div>
        <label class="t32" for="name" style="left:138px;top:265px">Enter your name</label>
        <input class="field" id="name" type="text" style="left:139px;top:307px">
        <label class="t32" for="room" style="left:138px;top:368px">Enter Room id</label>
        <input class="field warm" id="room" type="text" style="left:139px;top:414px">
        <label class="t32" for="newroom" style="left:649px;top:298px">Create Room id</label>
        <input class="field" id="newroom" type="text" style="left:651px;top:338px">
        <button class="pill" style="left:196px;top:505px">join</button>
        <button class="pill" style="left:738px;top:505px">create</button>
      </div>
    </section>

    <aside class="side-right flex-shrink-0 bg-white">
      <div class="side-head d-flex align-items-center gap-3"><a href="#" class="strong">Design</a><a href="#" class="muted">Prototype</a></div>
      <div class="panel">
        <div class="panel-line d-flex align-items-center strong">Page</div>
        <div class="panel-line d-flex align-items-center">
          <span class="swatch"></span><span class="hex ms-2">FFFFFF</span><span>100%</span>
          <button class="ms-auto" aria-label="Toggle visibility"><svg width="14" height="10" viewBox="0 0 14 10"><path class="ln" stroke="#111" d="M.7 5C3.500-.3 10.500-.3 13.300 5 10.500 10.300 3.500 10.300.7 5z" stroke-width="1.300"/><circle cx="7" cy="5" r="2.200" fill="#111"/></svg></button>
        </div>
      </div>
      <div class="panel d-flex align-items-center quiet"><span class="panel-line d-flex align-items-center">Local variables</span><button class="ms-auto" aria-label="Local variables"><svg width="14" height="14" viewBox="0 0 14 14"><g class="ln"><path d="M3.500 0v7M3.500 12v2M10.500 0v2M10.500 7v7"/><circle cx="3.500" cy="9.500" r="2.200"/><circle cx="10.500" cy="4.500" r="2.200"/></g></svg></button></div>
      <div class="panel d-flex align-items-center quiet"><span class="panel-line d-flex align-items-center">Local styles</span><button class="ms-auto" aria-label="Add style"><svg width="12" height="12" viewBox="0 0 12 12"><path class="ln" d="M5.500 0v11M0 5.500h11"/></svg></button></div>
      <div class="panel d-flex align-items-center quiet"><span class="panel-line d-flex align-items-center">Export</span><button class="ms-auto" aria-label="Add export"><svg width="12" height="12" viewBox="0 0 12 12"><path class="ln" d="M5.500 0v11M0 5.500h11"/></svg></button></div>
    </aside>
  </div>
  <button class="help d-flex align-items-center justify-content-center" aria-label="Help"><svg width="10" height="16" viewBox="0 0 10 16"><path class="ln" d="M1 4.500C1 2 2.700.8 5 .8s4 1.400 4 3.500C9 7.500 5 7.500 5 11.500" stroke-width="1.200"/><path class="ln" d="M5 13.500v1.500" stroke-width="1.300"/></svg></button>
</main>
<script src="https://cdn.jsdelivr.net/npm/bootstrap@5.3.0/dist/js/bootstrap.bundle.min.js"></script>
</body>
</html>
